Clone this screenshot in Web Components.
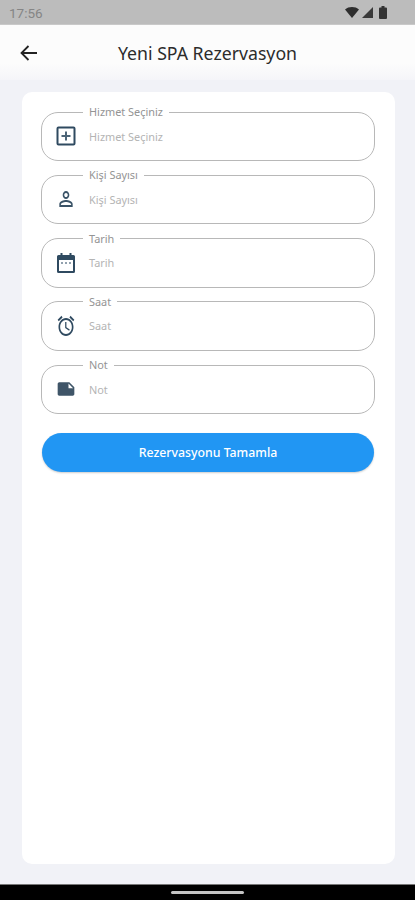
<!DOCTYPE html>
<html lang="tr">
<head>
<meta charset="utf-8">
<title>Yeni SPA Rezervasyon</title>
<style>
  html, body { margin: 0; padding: 0; height: 100%; }
  body { font-family: "Noto Sans", sans-serif; background: #f1f2f7; overflow: hidden; }
  spa-screen svg { display: block; }
</style>
</head>
<body>
<spa-screen>
  <status-bar slot="top" time="17:56"></status-bar>
  <app-bar slot="top" title="Yeni SPA Rezervasyon"></app-bar>

  <form-card>
    <form-field label="Hizmet Seçiniz">
      <svg slot="icon" width="20" height="20" viewBox="0 0 20 20" fill="none"><rect x="1.500" y="1.500" width="17" height="17" rx="1" stroke="#2f4a60" stroke-width="2"/><path d="M10 5.500v9M5.500 10h9" stroke="#4c6477" stroke-width="2"/></svg>
    </form-field>
    <form-field label="Kişi Sayısı">
      <svg slot="icon" width="27" height="24" viewBox="0 0 24 24" preserveAspectRatio="none" fill="#3a5367"><path d="M12 5.900c1.160 0 2.100.94 2.100 2.100s-.94 2.100-2.100 2.100S9.900 9.160 9.900 8s.94-2.100 2.100-2.100m0 9c2.970 0 6.100 1.460 6.100 2.100v1.100H5.900V17c0-.64 3.130-2.100 6.100-2.100M12 4C9.790 4 8 5.790 8 8s1.790 4 4 4 4-1.790 4-4-1.790-4-4-4zm0 9c-2.670 0-8 1.340-8 4v3h16v-3c0-2.660-5.330-4-8-4z"/></svg>
    </form-field>
    <form-field label="Tarih">
      <svg slot="icon" width="20" height="22" viewBox="0 0 20 22" fill="none"><path d="M2.500 3h15a1.500 1.500 0 0 1 1.500 1.500v15a1.500 1.500 0 0 1-1.500 1.500h-15a1.500 1.500 0 0 1-1.500-1.500v-15a1.500 1.500 0 0 1 1.500-1.500z" fill="#2f4a60"/><rect x="3" y="8" width="14" height="11" fill="#fff"/><path d="M5.500 1v3M14.500 1v3" stroke="#2f4a60" stroke-width="2"/><path d="M5 11h2M9 11h2M13 11h2" stroke="#6f8394" stroke-width="1.500"/></svg>
    </form-field>
    <form-field label="Saat">
      <svg slot="icon" width="22" height="24" viewBox="0 0 24 24" preserveAspectRatio="none" fill="#2f4a60"><path d="M22 5.720l-4.600-3.860-1.290 1.530 4.600 3.860L22 5.720zM7.880 3.390L6.600 1.860 2 5.710l1.290 1.530 4.590-3.850zM12.500 8H11v6l4.750 2.850.75-1.230-4-2.370V8zM12 4c-4.970 0-9 4.030-9 9s4.020 9 9 9c4.970 0 9-4.030 9-9s-4.030-9-9-9zm0 16c-3.870 0-7-3.130-7-7s3.130-7 7-7 7 3.130 7 7-3.130 7-7 7z"/></svg>
    </form-field>
    <form-field label="Not">
      <svg slot="icon" width="24" height="24" viewBox="0 0 24 24" fill="#3f5568"><path d="M22 10l-6-6H4c-1.100 0-2 .9-2 2v12.010c0 1.100.9 1.990 2 1.990l16-.01c1.100 0 2-.89 2-1.990v-8zm-7-4.500l5.500 5.500H15V5.500z"/></svg>
    </form-field>
    <primary-button>Rezervasyonu Tamamla</primary-button>
  </form-card>

  <nav-handle slot="bottom"></nav-handle>
</spa-screen>

<script>
class SpaScreen extends HTMLElement {
  constructor() {
    super();
    this.attachShadow({ mode: 'open' });
    this.shadowRoot.innerHTML = `
      <style>
        :host {
          display: flex;
          flex-direction: column;
          width: 415px;
          height: 900px;
          background: #f1f2f7;
        }
        main {
          flex: 1;
          display: flex;
          padding: 12px 20px 20px 22px;
          min-height: 0;
        }
      </style>
      <slot name="top"></slot>
      <main><slot></slot></main>
      <slot name="bottom"></slot>
    `;
  }
}

class StatusBar extends HTMLElement {
  constructor() {
    super();
    this.attachShadow({ mode: 'open' });
    this.shadowRoot.innerHTML = `
      <style>
        :host {
          display: flex;
          align-items: center;
          justify-content: space-between;
          box-sizing: border-box;
          height: 25px;
          padding: 1px 28px 0 9px;
          background: #bcbcbc;
          border-bottom: 1px solid #c9c9c9;
          color: #858585;
          font: 13.500px "Roboto", sans-serif;
        }
        .icons { display: flex; align-items: center; gap: 3px; }
        svg { display: block; }
      </style>
      <span id="time"></span>
      <div class="icons">
        <svg width="14" height="11" viewBox="0 0 14 11"><path d="M0 2.500C3.500-.8 10.500-.8 14 2.500L7 11z" fill="#2e2e2e"/></svg>
        <svg width="11" height="11" viewBox="0 0 11 11"><path d="M11 0V11H0z" fill="#3a3a3a"/></svg>
        <svg width="8" height="13" viewBox="0 0 8 13" style="margin-left:3px"><path d="M2.500 0h3v1.500H7a1 1 0 0 1 1 1V12a1 1 0 0 1-1 1H1a1 1 0 0 1-1-1V2.500a1 1 0 0 1 1-1h1.500z" fill="#333"/></svg>
      </div>
    `;
  }

  connectedCallback() {
    this.shadowRoot.querySelector('#time').textContent = this.getAttribute('time');
  }
}

class AppBar extends HTMLElement {
  constructor() {
    super();
    this.attachShadow({ mode: 'open' });
    this.shadowRoot.innerHTML = `
      <style>
        :host {
          display: grid;
          grid-template-columns: 58px 1fr 58px;
          align-items: center;
          height: 55px;
          background: linear-gradient(#fcfcfc 70%, #f5f5f9);
          color: #2c2c2c;
        }
        button {
          display: flex;
          border: 0;
          padding: 0 0 0 20px;
          background: none;
        }
        h1 {
          margin: 0;
          font: 400 17.700px "Noto Sans", sans-serif;
          text-align: center;
          white-space: nowrap;
        }
      </style>
      <button aria-label="Geri">
        <svg width="17" height="16" viewBox="0 0 17 16" fill="none" stroke="#222" stroke-width="1.800"><path d="M17 8H1.500M8.500 1L1.500 8l7 7"/></svg>
      </button>
      <h1></h1>
      <span></span>
    `;
  }

  connectedCallback() {
    this.shadowRoot.querySelector('h1').textContent = this.getAttribute('title');
  }
}

class FormCard extends HTMLElement {
  constructor() {
    super();
    this.attachShadow({ mode: 'open' });
    this.shadowRoot.innerHTML = `
      <style>
        :host {
          display: flex;
          flex-direction: column;
          flex: 1;
          box-sizing: border-box;
          padding: 19px 20px 0 19px;
          gap: 13.250px;
          background: #fff;
          border-radius: 10px;
        }
      </style>
      <slot></slot>
    `;
  }
}

class FormField extends HTMLElement {
  constructor() {
    super();
    this.attachShadow({ mode: 'open' });
    this.shadowRoot.innerHTML = `
      <style>
        :host {
          display: block;
          color: #b4b4b4;
          font: 10.900px "Noto Sans", sans-serif;
        }
        fieldset {
          display: flex;
          align-items: center;
          box-sizing: border-box;
          height: 56px;
          margin: -6px 0 0;
          padding: 0 0 0 14px;
          border: 1px solid #b8b8b8;
          border-radius: 17px;
        }
        legend {
          margin-left: 27px;
          padding: 0 6px;
          line-height: 14px;
          color: #949494;
        }
        .icon {
          display: flex;
          align-items: center;
          justify-content: center;
          width: 20px;
          margin-top: -7px;
        }
        .hint {
          margin: -7px 0 0 13px;
        }
      </style>
      <fieldset>
        <legend></legend>
        <span class="icon"><slot name="icon"></slot></span>
        <span class="hint"></span>
      </fieldset>
    `;
  }

  connectedCallback() {
    const label = this.getAttribute('label');
    this.shadowRoot.querySelector('legend').textContent = label;
    this.shadowRoot.querySelector('.hint').textContent = label;
  }
}

class PrimaryButton extends HTMLElement {
  constructor() {
    super();
    this.attachShadow({ mode: 'open' });
    this.shadowRoot.innerHTML = `
      <style>
        :host {
          display: block;
          margin: 6px 1px 0;
        }
        button {
          display: block;
          width: 100%;
          height: 39px;
          border: 0;
          border-radius: 20px;
          background: #2196f3;
          box-shadow: 0 1px 2px rgba(0, 0, 0, .2);
          color: #fff;
          font: 500 12.300px "Noto Sans", sans-serif;
        }
      </style>
      <button><slot></slot></button>
    `;
  }
}

class NavHandle extends HTMLElement {
  constructor() {
    super();
    this.attachShadow({ mode: 'open' });
    this.shadowRoot.innerHTML = `
      <style>
        :host {
          display: flex;
          align-items: center;
          justify-content: center;
          box-sizing: border-box;
          height: 16px;
          background: #000;
          border-top: 1px solid #777;
        }
        div {
          width: 73px;
          height: 3px;
          border-radius: 2px;
          background: #c4c4c4;
        }
      </style>
      <div></div>
    `;
  }
}

customElements.define('spa-screen', SpaScreen);
customElements.define('status-bar', StatusBar);
customElements.define('app-bar', AppBar);
customElements.define('form-card', FormCard);
customElements.define('form-field', FormField);
customElements.define('primary-button', PrimaryButton);
customElements.define('nav-handle', NavHandle);
</script>
</body>
</html>
